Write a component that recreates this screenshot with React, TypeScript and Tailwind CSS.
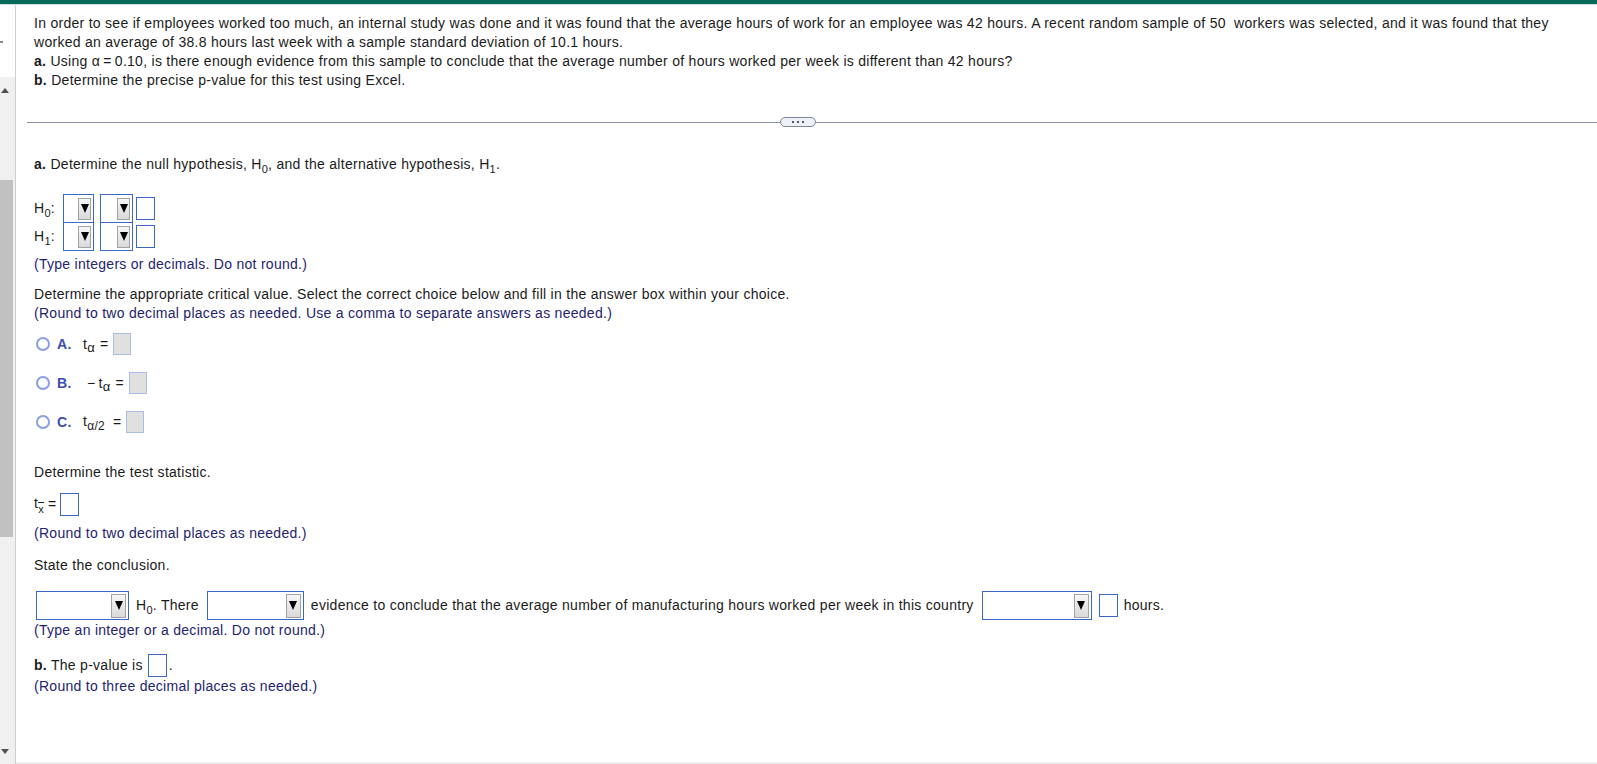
import React from "react";

const instr = "text-[#24246e]";

function Sub({ children, className = "top-[4px] text-[11px]" }: { children: React.ReactNode; className?: string }) {
  return <span className={`relative ${className}`}>{children}</span>;
}

function Arrow() {
  return (
    <svg width="8" height="9" viewBox="0 0 8 9">
      <polygon points="0,0 8,0 4,9" fill="#000" />
    </svg>
  );
}

function Select({ className, btn }: { className: string; btn: string }) {
  return (
    <div className={`flex shrink-0 items-center justify-end border border-[#3b67c9] bg-white pr-[2px] ${className}`}>
      <div className={`flex items-center justify-center border border-[#a3a3a3] bg-linear-to-b from-[#f7f7f7] to-[#d9d9d9] ${btn}`}>
        <Arrow />
      </div>
    </div>
  );
}

function Box({ className = "" }: { className?: string }) {
  return <div className={`h-[23px] w-[19px] shrink-0 border border-[#3b67c9] bg-white ${className}`} />;
}

function GrayBox({ className = "" }: { className?: string }) {
  return <div className={`h-[22px] w-[18px] shrink-0 border border-[#a9bde6] bg-[#e0e0e0] ${className}`} />;
}

function Radio() {
  return <div className="ml-[2px] h-[14px] w-[14px] shrink-0 rounded-full border-2 border-[#8a9fe3] bg-white" />;
}

function Option({ letter, children }: { letter: string; children: React.ReactNode }) {
  return (
    <div className="flex h-[24px] items-center">
      <Radio />
      <span className="ml-[7px] w-[26px] font-bold text-[#3b4db4]">{letter}</span>
      {children}
    </div>
  );
}

export default function App() {
  return (
    <div className="flex h-[764px] w-full flex-col overflow-hidden bg-white font-['Liberation_Sans',Arial,sans-serif] text-[14px] leading-[19px] tracking-[0.28px] text-[#1b1b1b]">
      <div className="h-[4px] shrink-0 bg-[#086a5b]" />
      <div className="h-px shrink-0 bg-[#d3dee5]" />
      <div className="flex min-h-0 flex-1">
        {/* left scroll strip */}
        <div className="flex w-[16px] shrink-0 flex-col border-r border-[#c9ced9]">
          <div className="h-[72px] shrink-0 bg-white pt-[36px]">
            <div className="h-[2px] w-[3px] bg-[#8a8a8a]" />
          </div>
          <div className="flex flex-1 flex-col bg-[#f0f0f0]">
            <svg className="ml-[1px] mt-[11px]" width="8" height="5" viewBox="0 0 8 5">
              <polygon points="0,5 8,5 4,0" fill="#505050" />
            </svg>
            <div className="mt-[87px] h-[357px] w-[13px] bg-[#c1c1c1]" />
            <svg className="ml-[1px] mt-[212px]" width="8" height="5" viewBox="0 0 8 5">
              <polygon points="0,0 8,0 4,5" fill="#505050" />
            </svg>
          </div>
        </div>

        <div className="flex min-w-0 flex-1 flex-col">
          <div className="flex-1">
            <div className="pl-[18px] pr-[20px] pt-[9px]">
              <p>
                In order to see if employees worked too much, an internal study was done and it was found that the average hours of work for an employee was 42 hours. A recent random sample of 50{"\u00a0"} workers was selected, and it was found that they
                <br />
                worked an average of 38.8 hours last week with a sample standard deviation of 10.1 hours.
              </p>
              <p>
                <b>a.</b> Using α{"\u2009"}={"\u2009"}0.10, is there enough evidence from this sample to conclude that the average number of hours worked per week is different than 42 hours?
              </p>
              <p>
                <b>b.</b> Determine the precise p-value for this test using Excel.
              </p>
            </div>

            {/* divider */}
            <div className="ml-[11px] mt-[27px] flex h-[10px] items-center">
              <div className="h-px w-[753px] bg-[#8a93a5]" />
              <div className="flex h-[10px] w-[36px] shrink-0 items-center justify-center gap-[3px] rounded-full border border-[#7a8699] bg-[#eef1f5]">
                <span className="h-[2px] w-[2px] bg-[#4f596b]" />
                <span className="h-[2px] w-[2px] bg-[#4f596b]" />
                <span className="h-[2px] w-[2px] bg-[#4f596b]" />
              </div>
              <div className="h-px flex-1 bg-[#8a93a5]" />
            </div>

            <div className="pl-[18px] pr-[20px]">
              <p className="mt-[28px]">
                <b>a.</b> Determine the null hypothesis, H<Sub>0</Sub>, and the alternative hypothesis, H<Sub>1</Sub>.
              </p>

              <div className="mt-[19px] flex h-[29px] items-center">
                <span className="w-[29px] shrink-0">
                  H<Sub>0</Sub>:
                </span>
                <Select className="h-[29px] w-[31px]" btn="h-[22px] w-[13px]" />
                <Select className="ml-[6px] h-[29px] w-[33px]" btn="h-[22px] w-[13px]" />
                <Box className="ml-[3px]" />
              </div>
              <div className="-mt-px flex h-[29px] items-center">
                <span className="w-[29px] shrink-0">
                  H<Sub>1</Sub>:
                </span>
                <Select className="h-[29px] w-[31px]" btn="h-[22px] w-[13px]" />
                <Select className="ml-[6px] h-[29px] w-[33px]" btn="h-[22px] w-[13px]" />
                <Box className="ml-[3px]" />
              </div>
              <p className={`mt-[4px] ${instr}`}>(Type integers or decimals. Do not round.)</p>

              <p className="mt-[11px]">
                Determine the appropriate critical value. Select the correct choice below and fill in the answer box within your choice.
              </p>
              <p className={instr}>(Round to two decimal places as needed. Use a comma to separate answers as needed.)</p>

              <div className="mt-[9px] flex flex-col gap-[15px]">
                <Option letter="A.">
                  <span>
                    t<Sub className="top-[3px] text-[13px]">α</Sub>
                  </span>
                  <span className="ml-[5px]">=</span>
                  <GrayBox className="ml-[5px]" />
                </Option>
                <Option letter="B.">
                  <span className="ml-[4px]">−</span>
                  <span className="ml-[3px]">
                    t<Sub className="top-[3px] text-[13px]">α</Sub>
                  </span>
                  <span className="ml-[5px]">=</span>
                  <GrayBox className="ml-[5px]" />
                </Option>
                <Option letter="C.">
                  <span>
                    t<Sub className="top-[4px] text-[12px]">α/2</Sub>
                  </span>
                  <span className="ml-[8px]">=</span>
                  <GrayBox className="ml-[5px]" />
                </Option>
              </div>

              <p className="mt-[29px]">Determine the test statistic.</p>
              <div className="mt-[11px] flex h-[22px] items-center">
                <span>
                  t<Sub className="top-[5px] text-[11px] overline">x</Sub>
                </span>
                <span className="ml-[4px]">=</span>
                <Box className="ml-[4px] h-[22px]" />
              </div>
              <p className={`mt-[9px] ${instr}`}>(Round to two decimal places as needed.)</p>

              <p className="mt-[13px]">State the conclusion.</p>
              <div className="mt-[16px] flex h-[29px] items-center whitespace-nowrap">
                <Select className="ml-[2px] h-[29px] w-[93px]" btn="h-[24px] w-[15px]" />
                <span className="ml-[7px]">
                  H<Sub>0</Sub>. There
                </span>
                <Select className="ml-[8px] h-[29px] w-[97px]" btn="h-[24px] w-[15px]" />
                <span className="ml-[7px]">
                  evidence to conclude that the average number of manufacturing hours worked per week in this country
                </span>
                <Select className="ml-[8px] h-[29px] w-[110px]" btn="h-[24px] w-[15px]" />
                <Box className="ml-[7px]" />
                <span className="ml-[6px]">hours.</span>
              </div>
              <p className={`mt-[1px] ${instr}`}>(Type an integer or a decimal. Do not round.)</p>

              <div className="mt-[14px] flex h-[22px] items-center">
                <span>
                  <b>b.</b> The p-value is
                </span>
                <Box className="ml-[5px] h-[22px]" />
                <span className="ml-[2px]">.</span>
              </div>
              <p className={`mt-[1px] ${instr}`}>(Round to three decimal places as needed.)</p>
            </div>
          </div>
          <div className="h-[2px] shrink-0 bg-[#efefef]" />
        </div>
      </div>
    </div>
  );
}
